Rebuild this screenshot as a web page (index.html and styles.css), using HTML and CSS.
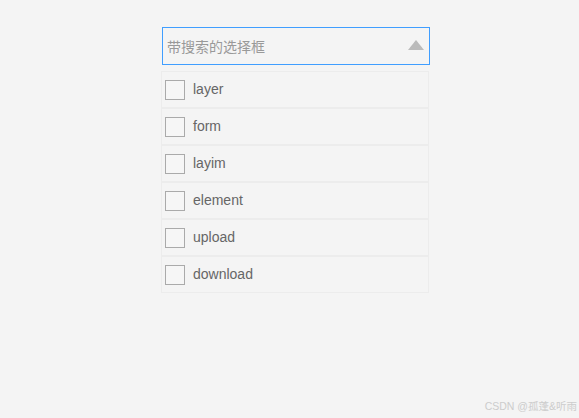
FILE: index.html
```html
<!DOCTYPE html>
<html lang="zh">
<head>
<meta charset="utf-8">
<link rel="stylesheet" href="styles.css">
</head>
<body>
<div class="page">
  <div class="select">
    <div class="input">
      <span class="placeholder">带搜索的选择框</span>
      <span class="arrow"></span>
    </div>
    <ul class="list">
      <li class="item"><span class="box"></span><span class="label">layer</span></li>
      <li class="item"><span class="box"></span><span class="label">form</span></li>
      <li class="item"><span class="box"></span><span class="label">layim</span></li>
      <li class="item"><span class="box"></span><span class="label">element</span></li>
      <li class="item"><span class="box"></span><span class="label">upload</span></li>
      <li class="item"><span class="box"></span><span class="label">download</span></li>
    </ul>
  </div>
  <div class="watermark">CSDN @孤蓬&amp;听雨</div>
</div>
</body>
</html>
```
FILE: styles.css
```css
html, body {
  margin: 0;
  padding: 0;
  background: #f4f4f4;
}
.page {
  position: relative;
  width: 579px;
  height: 418px;
  font-family: "Liberation Sans", Arial, "Noto Sans CJK SC", sans-serif;
}
.select {
  padding-top: 27px;
  padding-left: 161px;
  width: 268px;
}
.input {
  margin-left: 1px;
  width: 268px;
  height: 38px;
  box-sizing: border-box;
  border: 1px solid #409eff;
  display: flex;
  align-items: center;
  justify-content: space-between;
  padding: 0 5px 0 4px;
}
.placeholder {
  color: #999;
  font-size: 14px;
  font-family: "Noto Sans CJK SC", sans-serif;
}
.arrow {
  width: 0;
  height: 0;
  border-left: 8px solid transparent;
  border-right: 8px solid transparent;
  border-bottom: 10px solid #bbb;
  margin-top: -2px;
}
.list {
  list-style: none;
  margin: 6px 0 0 0;
  padding: 0;
  width: 268px;
}
.item {
  box-sizing: border-box;
  height: 37px;
  border: 1px solid #ececec;
  display: flex;
  align-items: center;
  padding-left: 3px;
}
.box {
  width: 20px;
  height: 20px;
  box-sizing: border-box;
  border: 1px solid #aaa;
  background: #f6f6f6;
}
.label {
  margin-left: 8px;
  margin-bottom: 2px;
  font-size: 14px;
  color: #666;
}
.watermark {
  position: absolute;
  right: 2px;
  bottom: 5px;
  font-size: 10.5px;
  color: #ccc;
  font-family: "Liberation Sans", "Noto Sans CJK SC", sans-serif;
}
```
